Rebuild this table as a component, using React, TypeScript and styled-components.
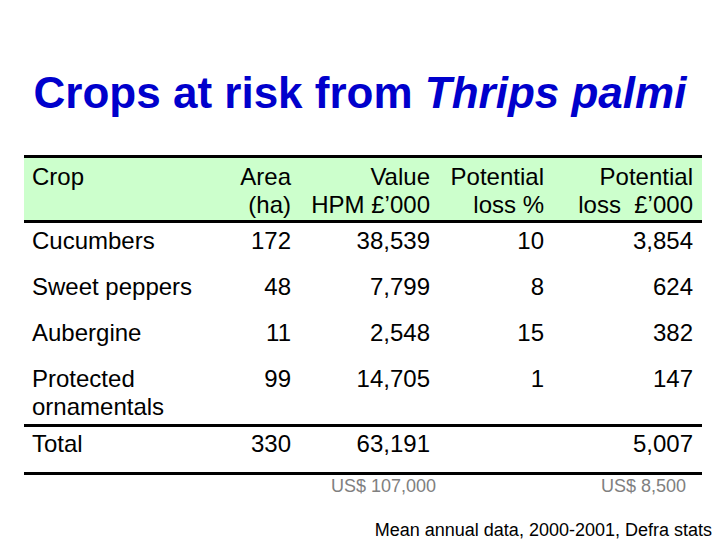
import React from 'react';
import styled, { createGlobalStyle } from 'styled-components';

const GlobalStyle = createGlobalStyle`
    html, body {
        margin: 0;
        padding: 0;
        background: #ffffff;
    }
    body {
        font-family: 'Liberation Sans', Arial, sans-serif;
        color: #000000;
    }
`;

const Slide = styled.div`
    width: 720px;
    height: 540px;
    box-sizing: border-box;
    padding-top: 67px;
    display: flex;
    flex-direction: column;
    overflow: hidden;
`;

const Title = styled.h1`
    margin: 0;
    font-size: 44px;
    line-height: 52px;
    font-weight: bold;
    color: #0000cc;
    text-align: center;
`;

const Species = styled.i`
    font-style: italic;
`;

const Table = styled.div`
    margin: 36px 18px 0 24px;
    font-size: 24px;
    line-height: 28px;
`;

const COLUMNS = '168px 91px 139px 114px 149px';

const Header = styled.div`
    display: grid;
    grid-template-columns: ${COLUMNS};
    padding: 5px 9px 1px 8px;
    background: #ccffcc;
    border-top: 3px solid #000;
    border-bottom: 3px solid #000;
`;

const Body = styled.div`
    display: grid;
    grid-template-columns: ${COLUMNS};
    row-gap: 18px;
    padding: 4px 9px 3px 8px;
    border-bottom: 3px solid #000;
`;

const TotalRow = styled.div`
    display: grid;
    grid-template-columns: ${COLUMNS};
    padding: 3px 9px 14px 8px;
    border-bottom: 3px solid #000;
`;

const Cell = styled.div<{ $left?: boolean }>`
    text-align: ${(p) => (p.$left ? 'left' : 'right')};
    white-space: pre;
`;

const Notes = styled.div`
    display: grid;
    grid-template-columns: ${COLUMNS};
    padding: 0 9px 0 8px;
    font-size: 18px;
    line-height: 22px;
    color: #808080;
`;

const Note = styled.div<{ $shift: number }>`
    text-align: right;
    padding-right: ${(p) => (p.$shift > 0 ? p.$shift : 0)}px;
    margin-right: ${(p) => (p.$shift < 0 ? p.$shift : 0)}px;
`;

const Source = styled.div`
    margin-top: 22px;
    padding-right: 8px;
    text-align: right;
    font-size: 18px;
    line-height: 22px;
`;

type Row = [string, string, string, string, string];

const rows: Row[] = [
    ['Cucumbers', '172', '38,539', '10', '3,854'],
    ['Sweet peppers', '48', '7,799', '8', '624'],
    ['Aubergine', '11', '2,548', '15', '382'],
    ['Protected\nornamentals', '99', '14,705', '1', '147'],
];

const renderRow = (row: Row) =>
    row.map((value, i) => (
        <Cell key={i} $left={i === 0}>
            {value}
        </Cell>
    ));

export default function App() {
    return (
        <Slide>
            <GlobalStyle />
            <Title>
                Crops at risk from <Species>Thrips palmi</Species>
            </Title>
            <Table>
                <Header>
                    <Cell $left>Crop</Cell>
                    <Cell>{'Area\n(ha)'}</Cell>
                    <Cell>{'Value\nHPM £’000'}</Cell>
                    <Cell>{'Potential\nloss %'}</Cell>
                    <Cell>{'Potential\nloss  £’000'}</Cell>
                </Header>
                <Body>{rows.map((r) => renderRow(r))}</Body>
                <TotalRow>{renderRow(['Total', '330', '63,191', '', '5,007'])}</TotalRow>
                <Notes>
                    <div />
                    <div />
                    <Note $shift={-6}>US$ 107,000</Note>
                    <div />
                    <Note $shift={7}>US$ 8,500</Note>
                </Notes>
            </Table>
            <Source>Mean annual data, 2000-2001, Defra stats</Source>
        </Slide>
    );
}
